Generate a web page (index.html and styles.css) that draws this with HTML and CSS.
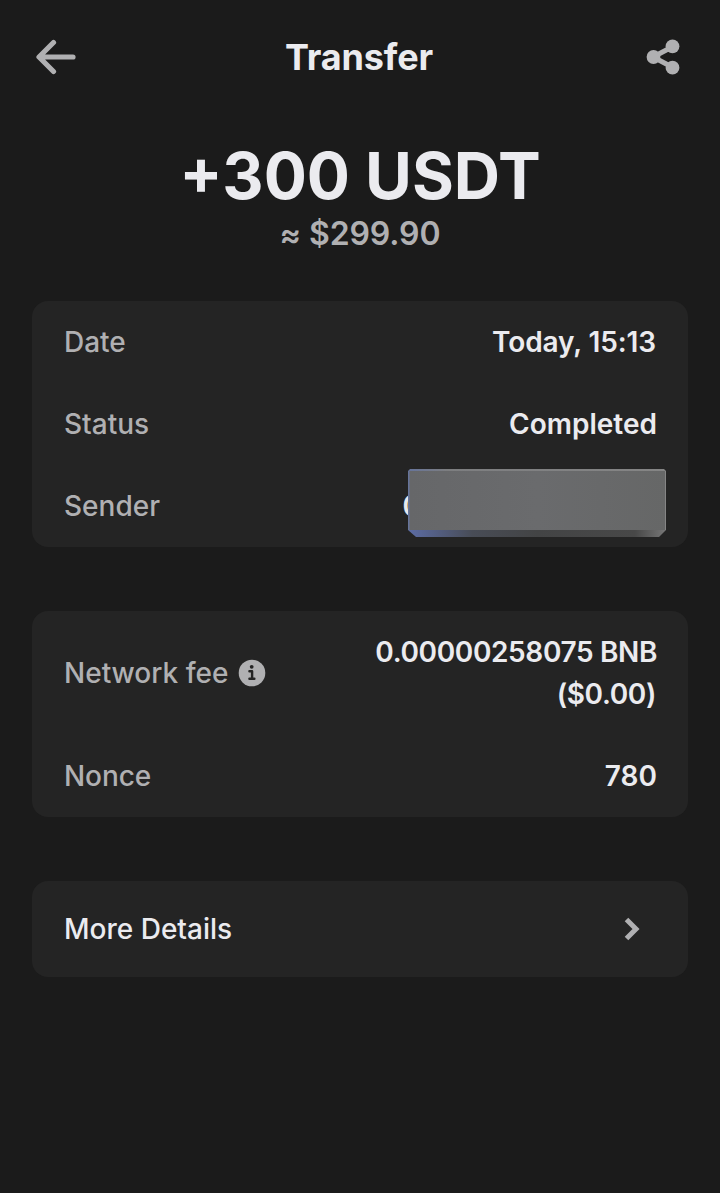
FILE: index.html
```html
<!DOCTYPE html>
<html lang="en">
<head>
<meta charset="utf-8">
<title>Transfer</title>
<link rel="stylesheet" href="styles.css">
</head>
<body>
<header class="topbar">
  <svg class="back" viewBox="0 0 40 36" width="40" height="36"><path d="M37 18H4M17.500 3.500L3 18L17.500 32.500"/></svg>
  <h1 class="title">Transfer</h1>
  <svg class="share" viewBox="0 0 34 36" width="34" height="36"><path d="M27 7.500L7 18L27 28.500"/><circle cx="26.500" cy="7.300" r="6.900"/><circle cx="7.500" cy="18" r="6.900"/><circle cx="26.500" cy="28.700" r="6.900"/></svg>
</header>
<main class="content">
  <section class="summary">
    <div class="amount">+300 USDT</div>
    <div class="fiat"><span class="approx">≈</span> $299.90</div>
  </section>
  <section class="card">
    <div class="row"><span class="label">Date</span><span class="value date">Today, 15:13</span></div>
    <div class="row"><span class="label">Status</span><span class="value">Completed</span></div>
    <div class="row"><span class="label">Sender</span><span class="value address">0</span>
      <svg class="mask" viewBox="0 0 258 68" width="258" height="68">
        <defs>
          <linearGradient id="face" x1="0" y1="0" x2="1" y2="0"><stop offset="0" stop-color="#666769"/><stop offset=".5" stop-color="#6a6b6d"/><stop offset="1" stop-color="#666767"/></linearGradient>
          <linearGradient id="rim" x1="0" y1="0" x2="1" y2="0"><stop offset="0" stop-color="#66749b"/><stop offset=".15" stop-color="#7d7e80"/><stop offset="1" stop-color="#858585"/></linearGradient>
          <linearGradient id="edge" x1="0" y1="0" x2="1" y2="0"><stop offset="0" stop-color="#5c6ca4"/><stop offset=".25" stop-color="#484c56"/><stop offset=".5" stop-color="#434445"/><stop offset=".88" stop-color="#484848"/><stop offset="1" stop-color="#777"/></linearGradient>
        </defs>
        <path fill="url(#rim)" d="M0 2L2 0H256L258 2V61H0Z"/>
        <path fill="url(#edge)" d="M0 61H258L251 68H8Z"/>
        <path fill="url(#face)" d="M1.500 2H257V61H1.500Z"/>
      </svg>
    </div>
  </section>
  <section class="card">
    <div class="row tall"><span class="label">Network fee</span>
      <svg class="info" viewBox="0 0 28 28" width="28" height="28"><circle cx="14" cy="14" r="13.300"/><circle class="ink" cx="13.700" cy="7.800" r="1.900"/><path d="M11.400 12.300H14.100V19.800M11.400 19.800H16.400"/></svg>
      <span class="value bnb">0.00000258075 BNB<br><span class="cost">($0.00)</span></span></div>
    <div class="row"><span class="label nonce">Nonce</span><span class="value number">780</span></div>
  </section>
  <section class="card more">
    <span>More Details</span>
    <svg class="chevron" viewBox="0 0 16 24" width="16" height="24"><path d="M2.500 2.500L12 12L2.500 21.500"/></svg>
  </section>
</main>
</body>
</html>
```
FILE: styles.css
```css
* { box-sizing: border-box; }
body { margin: 0; min-height: 1193px; background: #1b1b1b; color: #ebebef; font: 500 28px/42px Inter, sans-serif; }
svg { display: block; flex: none; }
.topbar { height: 114px; padding: 0 40px 0 36px; display: grid; grid-template-columns: 40px 1fr 34px; align-items: center; }
.title { margin: 0 4px 0 0; font-size: 36px; line-height: 44px; font-weight: 700; letter-spacing: -0.15px; text-align: center; }
.back path { fill: none; stroke: #b0b0b2; stroke-width: 5.200; stroke-linecap: round; stroke-linejoin: round; }
.share { fill: #b0b0b2; }
.share path { fill: none; stroke: #b0b0b2; stroke-width: 5; }
.content { padding: 0 32px; }
.summary { height: 187px; padding-top: 24px; text-align: center; }
.amount { font-size: 64px; line-height: 76px; font-weight: 700; }
.fiat { font-size: 32px; line-height: 40px; font-weight: 600; letter-spacing: -0.1px; color: #b0b0b2; }
.approx { position: relative; top: 1px; }
.card { margin-bottom: 64px; border-radius: 16px; background: #242424; }
.row { position: relative; min-height: 82px; padding: 0 31px 0 32px; display: flex; align-items: center; }
.tall { min-height: 124px; }
.label { color: #b0b0b2; font-weight: 500; }
.nonce { letter-spacing: -0.1px; }
.value { margin-left: auto; text-align: right; font-weight: 600; }
.date { padding-right: 1px; letter-spacing: -0.1px; }
.bnb { letter-spacing: -0.36px; }
.cost { padding-right: 1px; }
.address { margin-right: 236px; opacity: 0.99; }
.mask { position: absolute; left: 376px; top: 4px; }
.info { margin-left: 10px; fill: #b0b0b2; }
.info .ink { fill: #242424; }
.info path { fill: none; stroke: #242424; stroke-width: 2.400; stroke-linecap: round; stroke-linejoin: round; }
.more { height: 96px; padding: 0 48px 0 32px; display: flex; align-items: center; justify-content: space-between; }
.chevron path { fill: none; stroke: #b0b0b2; stroke-width: 5; }
```
